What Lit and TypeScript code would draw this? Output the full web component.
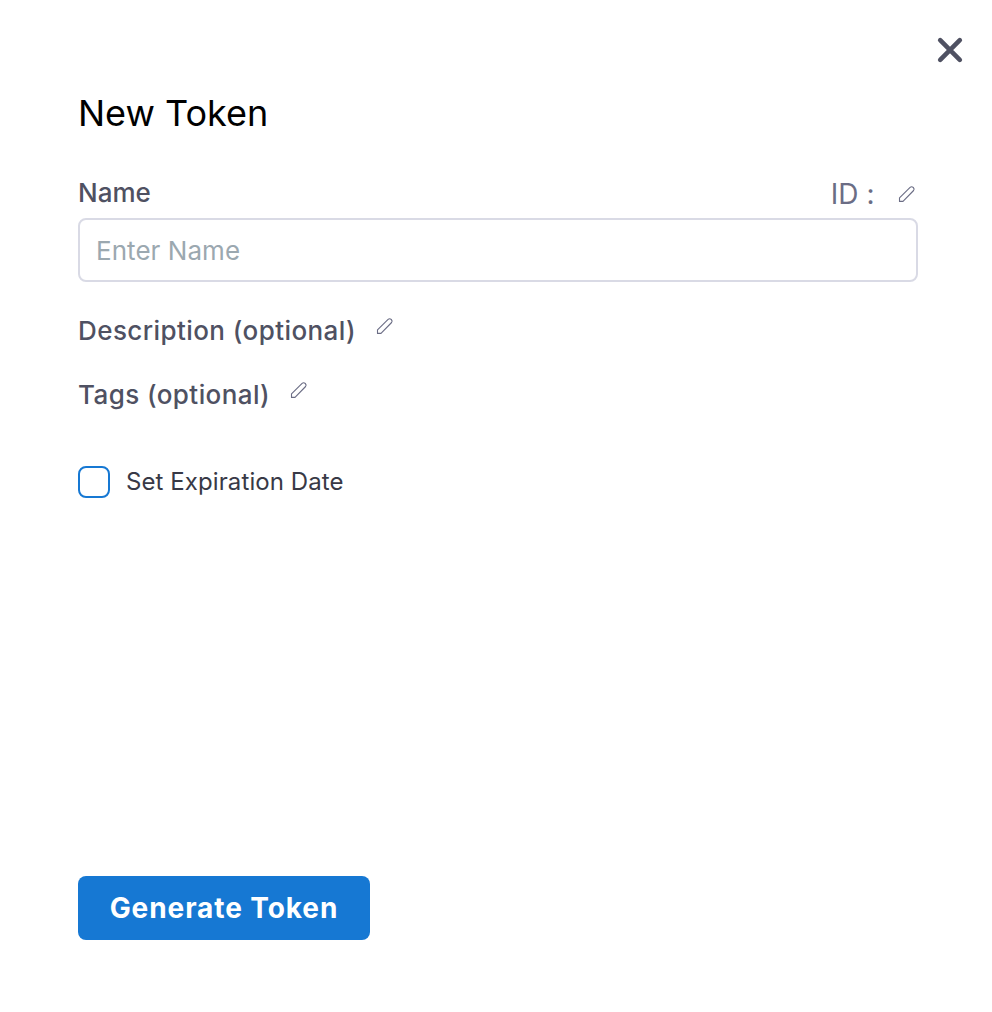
import { LitElement, html, css } from "lit";
import { customElement } from "lit/decorators.js";

@customElement("edit-icon")
class EditIcon extends LitElement {
  static styles = css`
    :host { display: block; width: 18px; height: 18px; color: #6b6d85; }
    svg { display: block; }
  `;
  render() {
    return html`<svg width="18" height="18" viewBox="0 0 18 18" fill="none" stroke="currentColor" stroke-width="1.1" stroke-linejoin="round">
      <path d="M1.5 16.4V12.8L12.1 2.4Q13.6 1.1 15.3 2.5Q16.8 4.1 15.6 5.5L5 16.4Z" />
    </svg>`;
  }
}

@customElement("app-root")
class AppRoot extends LitElement {
  static styles = css`
    :host {
      display: flex; flex-direction: column; box-sizing: border-box;
      width: 992px; height: 1012px; padding: 34px 26px 72px 78px;
      background: #fff; font-family: Inter, sans-serif; color: #4f5162;
    }
    * { box-sizing: border-box; }
    button { font: inherit; border: 0; padding: 0; margin: 0; background: none; color: inherit; }
    .close { align-self: flex-end; width: 32px; height: 32px; }
    .close svg { display: block; }
    .content { display: flex; flex-direction: column; flex: 1; width: 840px; }
    h1 { margin: 23px 0 0; font-size: 36px; line-height: 48px; font-weight: 400; color: #000; }
    .head { display: flex; justify-content: space-between; align-items: center; height: 32px; margin-top: 40px; }
    .label { font-size: 26px; line-height: 32px; font-weight: 500; letter-spacing: .42px; white-space: nowrap; }
    .head .label { letter-spacing: 0; }
    .id { display: flex; align-items: center; gap: 23.5px; padding: 2px 2px 0 0; font-size: 28px; line-height: 32px; color: #6b6d85; font-feature-settings: "calt" 0; }
    input {
      display: block; width: 840px; height: 64px; margin-top: 9px; padding: 0 16px;
      border: 2px solid #d9dae5; border-radius: 8px; background: #fff; outline: none;
      font: 400 26px/32px Inter, sans-serif; letter-spacing: .05px; color: #22222a;
    }
    input::placeholder { color: #9ba8b0; opacity: 1; }
    .optional { display: flex; align-items: flex-start; gap: 20px; height: 32px; }
    .description { margin-top: 33px; }
    .tags { margin-top: 32px; }
    .optional edit-icon { margin-top: 2px; }
    .check { display: flex; align-items: center; gap: 16px; height: 32px; margin-top: 55px; font-size: 24px; line-height: 32px; letter-spacing: .09px; color: #383946; }
    .box { width: 32px; height: 32px; border: 2px solid #1678d3; border-radius: 8px; }
    .generate {
      width: 292px; height: 64px; margin-top: auto; border-radius: 8px; background: #1678d3;
      color: #fff; font-size: 28px; line-height: 64px; font-weight: 700; letter-spacing: .92px; white-space: nowrap;
    }
  `;
  render() {
    return html`
      <button class="close" aria-label="Close">
        <svg width="32" height="32" viewBox="0 0 32 32" fill="none" stroke="#4f5162" stroke-width="4.6" stroke-linecap="round">
          <path d="M6.2 6.2L25.8 25.8M25.8 6.2L6.2 25.8" />
        </svg>
      </button>
      <div class="content">
        <h1>New Token</h1>
        <div class="head">
          <label class="label" for="name">Name</label>
          <div class="id"><span>ID :</span><edit-icon></edit-icon></div>
        </div>
        <input id="name" placeholder="Enter Name" />
        <div class="optional description"><span class="label">Description (optional)</span><edit-icon></edit-icon></div>
        <div class="optional tags"><span class="label">Tags (optional)</span><edit-icon></edit-icon></div>
        <div class="check" role="checkbox" aria-checked="false"><span class="box"></span><span class="text">Set Expiration Date</span></div>
        <button class="generate">Generate Token</button>
      </div>
    `;
  }
}
